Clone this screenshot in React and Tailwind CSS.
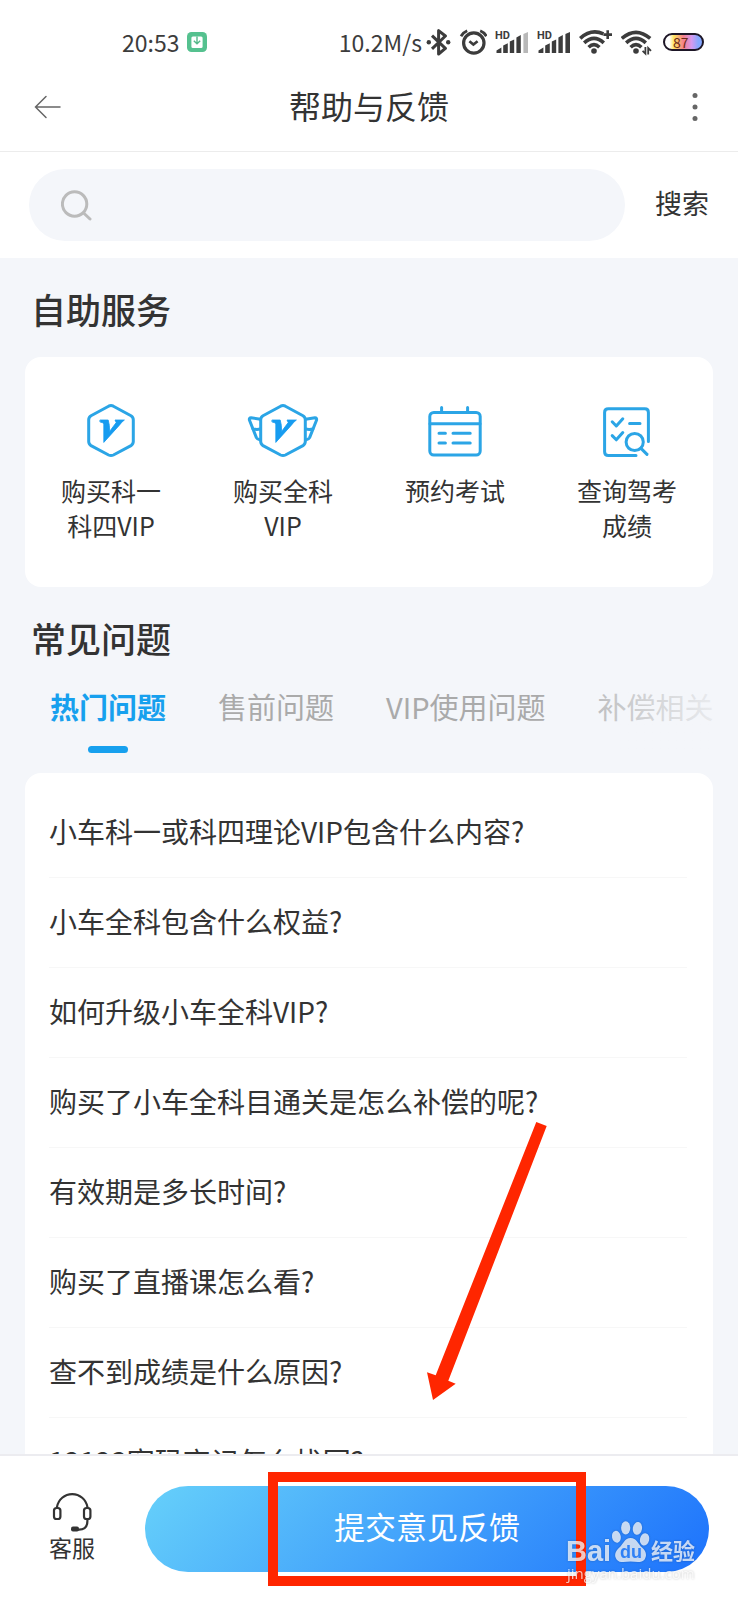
import { useState } from 'react'

const services = [
  { icon: VipIcon, lines: ['购买科一', '科四VIP'] },
  { icon: WingsIcon, lines: ['购买全科', 'VIP'] },
  { icon: CalendarIcon, lines: ['预约考试'] },
  { icon: ScoreIcon, lines: ['查询驾考', '成绩'] },
]

const tabs = ['热门问题', '售前问题', 'VIP使用问题', '补偿相关']

const questions = [
  '小车科一或科四理论VIP包含什么内容?',
  '小车全科包含什么权益?',
  '如何升级小车全科VIP?',
  '购买了小车全科目通关是怎么补偿的呢?',
  '有效期是多长时间?',
  '购买了直播课怎么看?',
  '查不到成绩是什么原因?',
  '12123密码忘记怎么找回?',
]

function ServiceSvg({ children }) {
  return (
    <svg
      viewBox="0 0 72 56"
      className="w-[72px] h-14"
      fill="none"
      stroke="#2ba5e6"
      strokeWidth="3"
      strokeLinecap="round"
      strokeLinejoin="round"
      aria-hidden="true"
    >
      {children}
    </svg>
  )
}

function VipBadge() {
  return (
    <>
      <path d="M33.6 4.2 Q36 3 38.4 4.2 L56 13.8 Q58.3 15.2 58.3 17.8 V39.6 Q58.3 42.2 56 43.6 L38.4 53 Q36 54.2 33.6 53 L16 43.6 Q13.7 42.2 13.7 39.6 V17.8 Q13.7 15.2 16 13.8 Z" />
      <path
        d="M25.3 18 H33.2 Q34.8 23 34.6 29.4 L41.2 20.6 L40 18 H49.4 Q46.6 20 44.2 23.4 L28.8 40.4 V22 Q28.4 20.4 25.3 20 Z"
        fill="#179cf0"
        stroke="#179cf0"
        strokeWidth="0.8"
      />
    </>
  )
}

function VipIcon() {
  return <ServiceSvg><VipBadge /></ServiceSvg>
}

function WingsIcon() {
  return (
    <ServiceSvg>
      <VipBadge />
      <path d="M13.4 17.2 L4 15.8 Q2 15.8 2.4 18 L9.4 35.6 Q10.4 37.6 13.4 38 M5.6 26.6 Q9 28 13.4 27" />
      <path d="M58.6 17.2 L68 15.8 Q70 15.8 69.6 18 L62.6 35.6 Q61.6 37.6 58.6 38 M66.4 26.6 Q63 28 58.6 27" />
    </ServiceSvg>
  )
}

function CalendarIcon() {
  return (
    <ServiceSvg>
      <rect x="10.8" y="10.4" width="50.4" height="42.6" rx="4" />
      <path d="M11 21.7 H61 M22.6 5.4 V10 M48.6 5.4 V10" />
      <path d="M20 31.3 H26.4 M34 31.3 H51.2 M20 41 H26.4 M34 41 H51.2" />
    </ServiceSvg>
  )
}

function ScoreIcon() {
  return (
    <ServiceSvg>
      <path d="M45 53.6 H17.4 Q13.6 53.6 13.6 49.8 V10.4 Q13.6 6.8 17.4 6.8 H53.8 Q57.4 6.8 57.4 10.4 V39.6" />
      <path d="M21.2 19.8 L25.3 24 L31.8 16.8 M21.2 33.6 L25.3 37.8 L31.8 30.6 M38.6 21.6 H49" />
      <circle cx="43.7" cy="40" r="8.6" />
      <path d="M50 46.4 L56 52.4" />
    </ServiceSvg>
  )
}

function Signal({ weak }) {
  return (
    <svg viewBox="0 0 34 28" className="w-[34px] h-7 fill-[#3c3c3c]" aria-hidden="true">
      <text x="0" y="11" fontSize="11" fontWeight="700" fontFamily="Roboto, sans-serif">HD</text>
      <path d="M1.5 25 V22.4 L6.4 19.6 V25 Z M8.2 25 V17.6 L12.8 15.2 V25 Z M14.8 25 V13.6 L19.2 11.4 V25 Z M21.4 25 V9.4 L25.8 7 V25 Z" />
      <path d="M28.4 25 V6 L33 4 V25 Z" className={weak ? 'fill-[#b8b8b8]' : 'fill-[#3c3c3c]'} />
    </svg>
  )
}

function Wifi({ plus }) {
  return (
    <svg viewBox="0 0 34 28" className="w-[34px] h-7" fill="none" stroke="#3c3c3c" strokeWidth="3.6" aria-hidden="true">
      <path d={plus ? 'M1.2 10.4 Q12 0.4 24.4 5.8' : 'M0.8 10.4 Q15 -1.8 29.2 10.4'} />
      <path d="M5.2 14.8 Q15 5.8 24.8 14.8" />
      <path d="M9.6 19.2 Q15 14 20.4 19.2" />
      <circle cx="15" cy="23" r="2.8" fill="#3c3c3c" stroke="none" />
      {plus
        ? <path d="M24.4 6.6 H33 M28.7 2.3 V10.9" strokeWidth="2.6" />
        : <path d="M24.4 19 V25.6 L21.6 22.8 M27.2 26.4 V20 L30 22.8" strokeWidth="1.8" />}
    </svg>
  )
}

function StatusBar() {
  return (
    <div className="h-16 pt-5 pl-[122px] pr-[34px] flex items-center justify-between text-[23px] leading-7 text-[#3c3c3c]">
      <div className="flex items-center gap-2">
        <span>20:53</span>
        <svg viewBox="0 0 20 20" className="w-5 h-5" aria-hidden="true">
          <rect width="20" height="20" rx="4.5" fill="#55c18f" />
          <rect x="4.4" y="4.4" width="11.2" height="11.6" rx="1.5" fill="#fff" />
          <path d="M10 4.4 V11.4 M6.8 8.8 L10 11.8 L13.2 8.8" fill="none" stroke="#55b98a" strokeWidth="1.4" />
        </svg>
      </div>
      <div className="flex items-center gap-2">
        <div className="flex items-center gap-1">
          <span>10.2M/s</span>
          <svg viewBox="0 0 25 28" className="w-[25px] h-7" fill="none" stroke="#3c3c3c" strokeWidth="3" strokeLinejoin="round" aria-hidden="true">
            <path d="M6 7.6 L19.4 20.4 L12.6 26 V2.6 L19.4 8 L6 20.8" />
            <circle cx="2.8" cy="14.2" r="2.2" fill="#3c3c3c" stroke="none" />
            <circle cx="22.2" cy="14.2" r="2.2" fill="#3c3c3c" stroke="none" />
          </svg>
        </div>
        <svg viewBox="0 0 28 28" className="w-7 h-7" fill="none" stroke="#3c3c3c" strokeWidth="3.2" aria-hidden="true">
          <circle cx="14.8" cy="15" r="10.2" />
          <path d="M2 8.2 Q4.2 4.4 8.2 2.8 M27.4 8.2 Q25.2 4.4 21.2 2.8" strokeWidth="2.8" />
          <path d="M10.4 13.2 L14.4 16.6 L18.6 13.2" strokeWidth="2.6" />
        </svg>
        <Signal weak />
        <Signal />
        <Wifi plus />
        <Wifi />
        <div className="w-[41px] h-[18px] rounded-full border-2 border-[#1d1626] bg-[linear-gradient(90deg,#fff_12%,#ffe45c_24%,#f5808c_50%,#d59af0_72%,#86a8ff_90%)] flex items-center pl-2">
          <span className="text-[14px] leading-[14px] text-[#6b2b16]">87</span>
        </div>
      </div>
    </div>
  )
}

function Watermark() {
  return (
    <svg
      viewBox="0 0 140 68"
      className="absolute right-9 bottom-[14px] w-[140px] h-[68px] drop-shadow-[0_0_1px_rgba(0,0,0,0.3)] pointer-events-none"
      fill="#fff"
      fillOpacity="0.75"
      aria-hidden="true"
    >
      <text x="4" y="43" fontSize="29" fontWeight="700" fontFamily="'Liberation Sans', sans-serif">Bai</text>
      <ellipse cx="54.4" cy="18.8" rx="4.4" ry="6" transform="rotate(-12 54.4 18.8)" />
      <ellipse cx="63.7" cy="9.8" rx="4.6" ry="6.6" />
      <ellipse cx="75.4" cy="10.4" rx="4.6" ry="6.4" transform="rotate(10 75.4 10.4)" />
      <ellipse cx="82.6" cy="21.4" rx="4.6" ry="6.2" transform="rotate(14 82.6 21.4)" />
      <path d="M68.6 20 C74.6 20 76 26 80 29.6 C84.6 33.6 85 38 82.6 41.4 C79.4 45.4 74 43.6 68.6 43.6 C63.4 43.6 58 45.6 54.6 41.4 C52 37.6 53 33.4 57.4 29.6 C61.4 26 62.6 20 68.6 20 Z" />
      <text x="58" y="40" fontSize="18" fontWeight="700" fontFamily="'Liberation Sans', sans-serif" fill="#2f80f6" fillOpacity="1">du</text>
      <text x="89" y="41" fontSize="22" fontWeight="700" fontFamily="'Noto Sans CJK SC', sans-serif">经验</text>
      <text x="5" y="61" fontSize="15" fontFamily="'Open Sans', sans-serif">jingyan.baidu.com</text>
    </svg>
  )
}

export default function App() {
  const [active, setActive] = useState(0)

  return (
    <div className="h-screen flex flex-col overflow-hidden bg-[#f4f6fa] text-[#333] font-['Noto_Sans_CJK_SC',sans-serif]">
      <header className="bg-white shrink-0">
        <StatusBar />
        <div className="h-[88px] px-8 pb-[2px] flex items-center justify-between border-b border-[#ececec]">
          <button aria-label="返回" className="w-8 h-8 flex items-center justify-center">
            <svg viewBox="0 0 28 24" className="w-7 h-6" fill="none" stroke="#666" strokeWidth="1.5" strokeLinecap="round">
              <path d="M1.5 12 H26 M12 1.5 L1.5 12 L12 22.5" />
            </svg>
          </button>
          <h1 className="pb-1 text-[32px] leading-10">帮助与反馈</h1>
          <button aria-label="更多" className="w-8 h-8 flex items-center justify-end">
            <svg viewBox="0 0 22 32" className="w-[22px] h-8" fill="#666">
              <circle cx="11" cy="4.5" r="2.5" />
              <circle cx="11" cy="16" r="2.5" />
              <circle cx="11" cy="27.5" r="2.5" />
            </svg>
          </button>
        </div>

        <form className="py-[17px] px-[29px] flex items-center gap-[30px]" onSubmit={(e) => e.preventDefault()}>
          <label className="flex-1 h-[72px] rounded-full bg-[#f4f6fa] flex items-center gap-3 px-8">
            <svg viewBox="0 0 32 32" className="w-8 h-8" fill="none" stroke="#bbb" strokeWidth="3" strokeLinecap="round" aria-hidden="true">
              <circle cx="13.6" cy="15" r="12.2" />
              <path d="M22.6 24 L29 30" />
            </svg>
            <input type="search" aria-label="搜索问题" className="flex-1 min-w-0 bg-transparent outline-none text-[27px]" />
          </label>
          <button type="submit" className="pb-1 text-[27px] leading-9">搜索</button>
        </form>
      </header>

      <main className="flex-1 min-h-0 overflow-hidden px-[25px]">
        <h2 className="mt-[31px] pl-[6px] text-[35px] leading-10 font-medium">自助服务</h2>
        <div className="mt-7 h-[230px] rounded-2xl bg-white pt-[45px] grid grid-cols-4">
          {services.map(({ icon: Icon, lines }) => (
            <button key={lines[0]} className="flex flex-col items-center justify-start gap-[15px]">
              <Icon />
              <span className="text-[25px] leading-[35px]">
                {lines.map((line) => <span key={line} className="block">{line}</span>)}
              </span>
            </button>
          ))}
        </div>

        <h2 className="mt-[31px] pl-[6px] text-[35px] leading-10 font-medium">常见问题</h2>
        <div className="mt-7 relative overflow-hidden">
          <div role="tablist" className="pl-[25px] flex gap-[52px] whitespace-nowrap">
            {tabs.map((tab, i) => (
              <button
                key={tab}
                role="tab"
                aria-selected={i === active}
                onClick={() => setActive(i)}
                className={`shrink-0 flex flex-col items-center gap-5 text-[29px] leading-10 ${i === active ? 'font-bold text-[#17a0ee]' : 'text-[#aaa]'}`}
              >
                {tab}
                <span className={`w-10 h-[7px] rounded-full ${i === active ? 'bg-[#17a0ee]' : ''}`} />
              </button>
            ))}
          </div>
          <div className="absolute inset-y-0 right-0 w-44 bg-linear-to-r from-[#f4f6fa]/0 to-[#f4f6fa]/85 pointer-events-none" />
        </div>

        <ul className="mt-5 rounded-t-2xl bg-white pl-6 pr-[26px] pt-[15px]">
          {questions.map((question) => (
            <li key={question} className="h-[90px] pb-1 flex items-center border-b border-[#f7f7f7]">
              <a href="#" className="text-[28px] leading-9 whitespace-nowrap">{question}</a>
            </li>
          ))}
        </ul>
      </main>

      <footer className="relative shrink-0 bg-white border-t-2 border-[#ececf0] pt-[30px] pb-7 pl-[49px] pr-[29px] flex items-center gap-[50px]">
        <button className="self-start mt-1 flex flex-col items-center text-[23px] leading-[27px] shrink-0">
          <svg viewBox="0 0 42 44" className="w-[42px] h-11" fill="none" stroke="#333" strokeWidth="2.2" aria-hidden="true">
            <path d="M6 18 V17 A15.4 15.4 0 0 1 36.4 17 V18" />
            <rect x="3" y="18" width="6.4" height="11" rx="2.6" />
            <rect x="33" y="18" width="6.4" height="11" rx="2.6" />
            <path d="M36.4 29 V31 Q36.4 39.6 28 39.6 H24" />
            <rect x="20" y="36.4" width="8" height="5" rx="2" fill="#333" stroke="none" />
          </svg>
          客服
        </button>
        <div className="relative flex-1">
          <button className="block w-full h-[86px] pb-[6px] rounded-full bg-[linear-gradient(135deg,#66d0fa,#1d72fc)] text-white text-[31px] leading-10">
            提交意见反馈
          </button>
          <div className="absolute -inset-y-[14px] left-1/2 -translate-x-1/2 w-[318px] border-10 border-[#ff2600] pointer-events-none" />
          <svg viewBox="0 0 120 278" className="absolute left-1/2 bottom-[172px] w-[120px] h-[278px] pointer-events-none" fill="#ff2600" aria-hidden="true">
            <path d="M109.3 0 L119.7 4 L21.3 258.7 L28.7 261.7 L6 278 L0 250.3 L8.7 253.3 Z" />
          </svg>
        </div>
        <Watermark />
      </footer>
    </div>
  )
}
